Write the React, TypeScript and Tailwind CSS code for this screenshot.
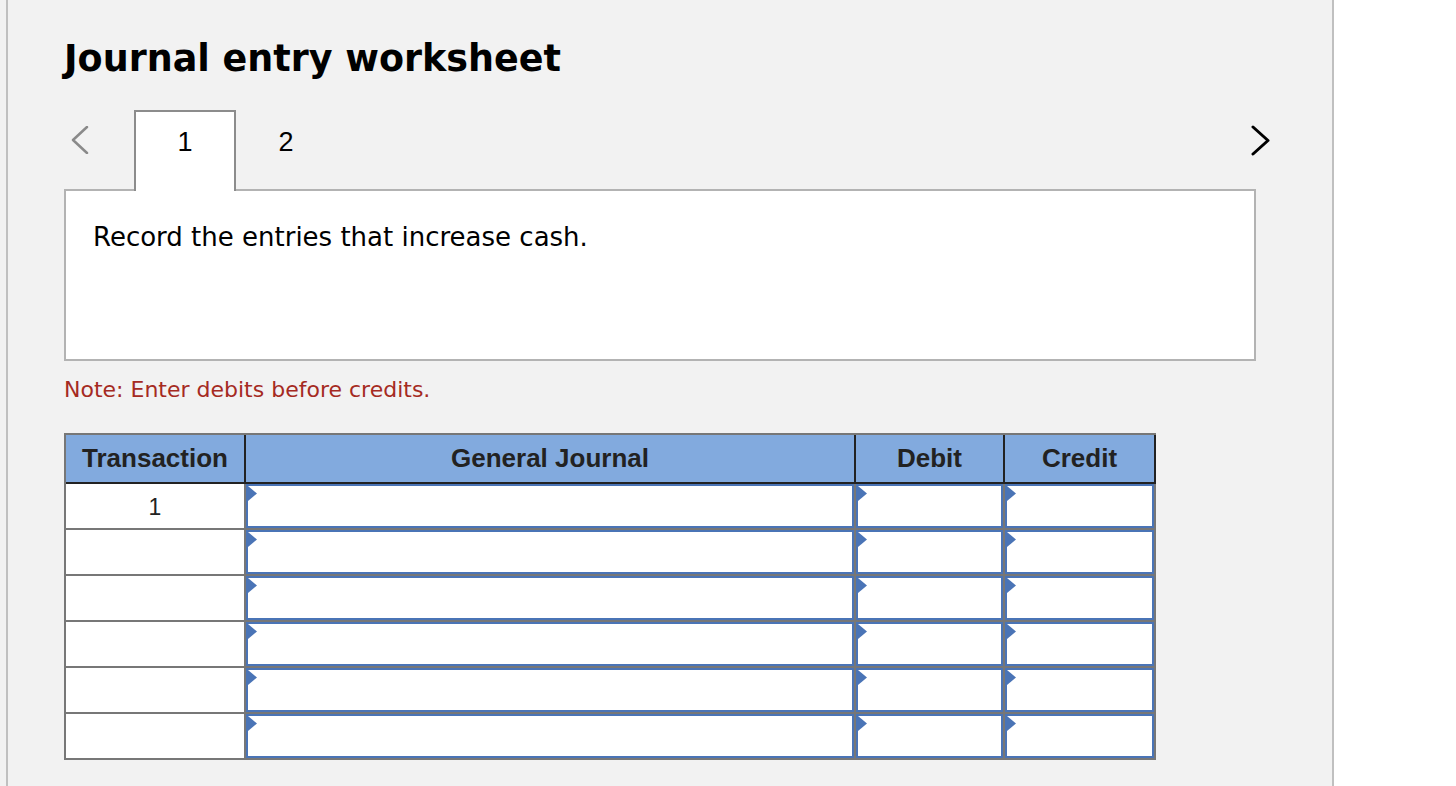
import React from "react";

/* Journal entry worksheet — step 1 of 2 */

const ROWS = [1, 2, 3, 4, 5, 6];

function InputCell({ className = "" }: { className?: string }) {
  return (
    <div className={`relative h-[44px] bg-white border-2 border-[#4a74b6] ${className}`}>
      {/* little blue flag in the corner */}
      <svg className="absolute left-0 top-0" width="9" height="15" viewBox="0 0 9 15">
        <polygon points="0,0 9,7.5 0,15" fill="#4a74b6" />
      </svg>
    </div>
  );
}

function HeaderCell({ children }: { children: React.ReactNode }) {
  return (
    <div className="h-[47px] bg-[#82aade] flex items-center justify-center text-[26px] font-bold text-[#222]">
      {children}
    </div>
  );
}

export default function App() {
  return (
    <div
      className="w-[1456px] h-[786px] bg-white flex overflow-hidden"
      style={{ fontFamily: "'DejaVu Sans', Verdana, sans-serif" }}
    >
      <div className="w-[6px] bg-[#f2f2f2]" />
      <div className="w-[1328px] h-full bg-[#f2f2f2] border-l-2 border-r-2 border-[#c0c0c0] pl-[56px] pr-[76px] pt-[37px]">
        {/* Title */}
        <h1 className="text-[36.5px] leading-[44px] font-bold text-black">Journal entry worksheet</h1>

        {/* Tabs */}
        <div className="mt-[29px] h-[79px] flex items-start">
          <div className="w-[70px] h-[79px] pl-[7px] pt-[16px]">
            <svg width="18" height="28" viewBox="0 0 18 28" fill="none">
              <polyline points="16,1 2,14 16,27" stroke="#8a8a8a" strokeWidth="2.5" strokeLinecap="round" strokeLinejoin="round" />
            </svg>
          </div>
          <div
            className="relative z-10 w-[102px] h-[81px] bg-white border-2 border-b-0 border-[#8c8c8c] pt-[14px] text-center text-[27px] leading-[32px] text-black"
            style={{ fontFamily: "'Liberation Sans', Arial, sans-serif" }}
          >
            1
          </div>
          <div
            className="w-[100px] pt-[16px] text-center text-[27px] leading-[32px] text-black"
            style={{ fontFamily: "'Liberation Sans', Arial, sans-serif" }}
          >
            2
          </div>
          <div className="flex-1" />
          <div className="pt-[15px] mr-[-14px]">
            <svg width="19" height="31" viewBox="0 0 19 31" fill="none">
              <polyline points="2,2 17,15.5 2,29" stroke="#000" strokeWidth="3" strokeLinecap="round" strokeLinejoin="round" />
            </svg>
          </div>
        </div>

        {/* Instructions */}
        <div className="h-[172px] bg-white border-2 border-[#b3b3b3] pl-[27px] pt-[31px]">
          <p className="text-[26px] leading-[30px] text-black">Record the entries that increase cash.</p>
        </div>

        <p className="mt-[16px] text-[22px] leading-[26px] text-[#a52a22]">Note: Enter debits before credits.</p>

        {/* Journal table */}
        <div
          className="mt-[30px] w-[1092px] border-2 border-[#777] bg-[#777]"
          style={{ fontFamily: "'Liberation Sans', Arial, sans-serif" }}
        >
          <div className="relative grid grid-cols-[178px_608px_147px_149px] gap-x-[2px] bg-[#222] border-b-2 border-[#222] shadow-[2px_0_0_#222]">
            <HeaderCell>Transaction</HeaderCell>
            <HeaderCell>General Journal</HeaderCell>
            <HeaderCell>Debit</HeaderCell>
            <HeaderCell>Credit</HeaderCell>
          </div>
          <div className="grid grid-cols-[178px_608px_147px_149px] gap-[2px]">
            {ROWS.map((r) => (
              <React.Fragment key={r}>
                <div className="h-[44px] bg-white flex items-center justify-center text-[23px] text-[#222] pt-[2px]">
                  {r === 1 ? "1" : ""}
                </div>
                <InputCell />
                <InputCell />
                <InputCell />
              </React.Fragment>
            ))}
          </div>
        </div>
      </div>
    </div>
  );
}
